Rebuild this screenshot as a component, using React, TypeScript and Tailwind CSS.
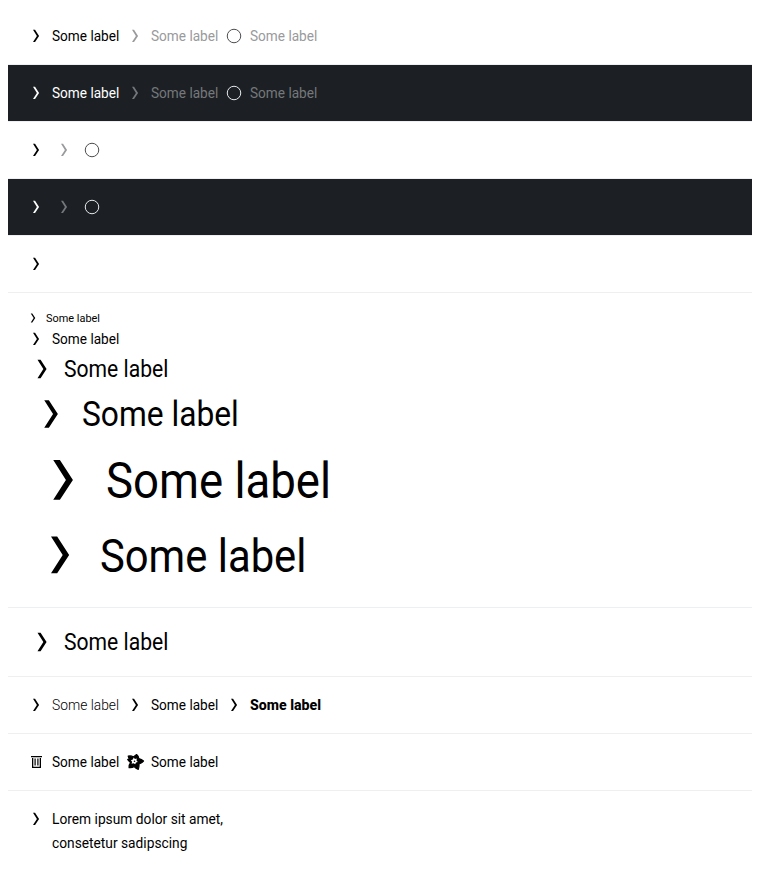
import React from "react";

type Tone = "black" | "white" | "mutedLight" | "mutedDark" | "spinLight" | "spinDark";

const tones: Record<Tone, string> = {
  black: "text-black",
  white: "text-white",
  mutedLight: "text-[#999a9c]",
  mutedDark: "text-[#75787b]",
  spinLight: "text-[#4b4d50]",
  spinDark: "text-[#e8e9ea]",
};

type IconName = "arrow" | "spinner" | "delete" | "flower";

function Icon({ name, tone = "black" }: { name: IconName; tone?: Tone }) {
  return (
    <svg viewBox="0 0 24 24" fill="currentColor" className={`size-[1.5em] shrink-0 ${tones[tone]}`}>
      {name === "arrow" && <path d="M9 5.85h2.05L15.05 12l-4 6.1H9L12.9 12z" />}
      {name === "spinner" && <circle cx="12" cy="12" r="6.75" fill="none" stroke="currentColor" strokeWidth="1" />}
      {name === "delete" && (
        <path d="M7 6h11v1.300H7zM8 8h1.300v8.700h6.400V8H17v10H8zM10.500 8.500h1.200v7h-1.200zM13.300 8.500h1.200v7h-1.200z" />
      )}
      {name === "flower" && (
        <>
          <path
            stroke="currentColor"
            strokeWidth="1.200"
            strokeLinejoin="round"
            d="M5.200 6.200Q8 5.400 10.400 7 12 5.600 13.600 4.500 15.600 6 15.800 8.600 18.600 9.400 20.500 11 18.700 13 16 14 16.200 17 15.300 19.400 12.800 18.600 11.200 16.600 9 18 6.100 17.600 5.900 14.800 7.600 12.600 5.400 11 4.700 9.600 5.600 9 6.600 8.800 5.400 7.600 5.200 6.200z"
          />
          <path fill="white" d="M10.700 7.600l1.200 1.400 1.900-.4-.3 1.900 1.300 1.400-1.800.6-.8 1.700-1.600-.9-2 .4.500-1.900-1.200-1.600 1.900-.7z" />
          <circle cx="11.500" cy="11.200" r=".8" />
        </>
      )}
    </svg>
  );
}

const body = "text-[16px] leading-[24px]";
const bodyLabel = "w-[67px] text-[15px] scale-x-[0.908]";

function Item({
  icon = "arrow",
  label,
  tone,
  iconTone,
  text = body,
  labelClass = bodyLabel,
}: {
  icon?: IconName;
  label?: React.ReactNode;
  tone?: Tone;
  iconTone?: Tone;
  text?: string;
  labelClass?: string;
}) {
  return (
    <div className={`flex items-start gap-1 whitespace-nowrap ${text}`}>
      <Icon name={icon} tone={iconTone ?? tone} />
      {label && <span className={`origin-left ${labelClass} ${tones[tone ?? "black"]}`}>{label}</span>}
    </div>
  );
}

function Section({ children, className = "" }: { children: React.ReactNode; className?: string }) {
  return (
    <section className="border-b border-[#eeeff0]">
      <div className={`flex gap-1 p-4 ${className}`}>{children}</div>
    </section>
  );
}

const sizes = [
  { text: "text-[12px] leading-[18px]", labelClass: "text-[11.5px] scale-x-[0.95]" },
  { text: body, labelClass: bodyLabel },
  { text: "text-[24px] leading-[36px]", labelClass: "text-[23px] scale-x-[0.918] translate-y-px" },
  { text: "text-[36px] leading-[54px]", labelClass: "text-[34.5px] scale-x-[0.92]" },
  { text: "text-[52px] leading-[78px]", labelClass: "text-[50px] scale-x-[0.911] translate-y-px" },
  { text: "text-[48px] leading-[72px]", labelClass: "text-[46px] scale-x-[0.908] translate-y-px" },
];

export default function App() {
  const label = "Some label";
  return (
    <main className="h-[879px] bg-white p-2 font-[Roboto,sans-serif]">
      <Section>
        <Item label={label} />
        <Item label={label} tone="mutedLight" />
        <Item icon="spinner" label={label} tone="mutedLight" iconTone="spinLight" />
      </Section>
      <Section className="bg-[#1c2024]">
        <Item label={label} tone="white" />
        <Item label={label} tone="mutedDark" />
        <Item icon="spinner" label={label} tone="mutedDark" iconTone="spinDark" />
      </Section>
      <Section>
        <Item />
        <Item tone="mutedLight" />
        <Item icon="spinner" iconTone="spinLight" />
      </Section>
      <Section className="bg-[#1c2024]">
        <Item tone="white" />
        <Item tone="mutedDark" />
        <Item icon="spinner" iconTone="spinDark" />
      </Section>
      <Section>
        <Item />
      </Section>
      <Section className="flex-col !gap-0">
        {sizes.map((size) => (
          <Item key={size.text} label={label} {...size} />
        ))}
      </Section>
      <Section>
        <Item label={label} {...sizes[2]} />
      </Section>
      <Section>
        <Item label={label} labelClass="w-[67px] text-[15px] scale-x-[0.92] font-light" />
        <Item label={label} />
        <Item label={label} labelClass="w-[71px] text-[15px] scale-x-[0.943] font-extrabold" />
      </Section>
      <Section>
        <Item icon="delete" label={label} />
        <Item icon="flower" label={label} />
      </Section>
      <div className="flex p-4">
        <Item
          labelClass="w-[172px] text-[15px] scale-x-[0.917]"
          label={
            <>
              Lorem ipsum dolor sit amet,
              <br />
              consetetur sadipscing
            </>
          }
        />
      </div>
    </main>
  );
}
